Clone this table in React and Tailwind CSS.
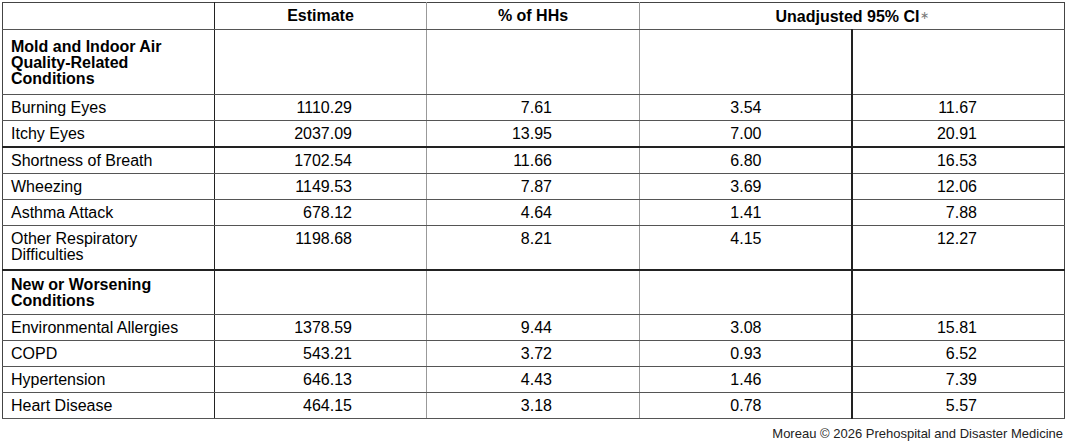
import React from 'react'

const groups = [
  {
    title: ['Mold and Indoor Air', 'Quality-Related', 'Conditions'],
    h: 'h-[65px]',
    pt: 'pt-[9px]',
    rows: [
      { label: 'Burning Eyes', est: '1110.29', pct: '7.61', lo: '3.54', hi: '11.67' },
      { label: 'Itchy Eyes', est: '2037.09', pct: '13.95', lo: '7.00', hi: '20.91', thick: true },
      { label: 'Shortness of Breath', est: '1702.54', pct: '11.66', lo: '6.80', hi: '16.53' },
      { label: 'Wheezing', est: '1149.53', pct: '7.87', lo: '3.69', hi: '12.06' },
      { label: 'Asthma Attack', est: '678.12', pct: '4.64', lo: '1.41', hi: '7.88' },
      { label: ['Other Respiratory', 'Difficulties'], est: '1198.68', pct: '8.21', lo: '4.15', hi: '12.27', thick: true, tall: true },
    ],
  },
  {
    title: ['New or Worsening', 'Conditions'],
    h: 'h-[45px]',
    pt: 'pt-[6px]',
    rows: [
      { label: 'Environmental Allergies', est: '1378.59', pct: '9.44', lo: '3.08', hi: '15.81' },
      { label: 'COPD', est: '543.21', pct: '3.72', lo: '0.93', hi: '6.52' },
      { label: 'Hypertension', est: '646.13', pct: '4.43', lo: '1.46', hi: '7.39' },
      { label: 'Heart Disease', est: '464.15', pct: '3.18', lo: '0.78', hi: '5.57' },
    ],
  },
]

const lineLabel = (label) =>
  Array.isArray(label) ? label.map((l, i) => <div key={i}>{l}</div>) : label

function App() {
  return (
    <div className="w-[1067px] h-[441px] bg-white pl-[2px] pt-[2px] text-black font-['Liberation_Sans',Arial,sans-serif] text-[16px] leading-[16px]">
      <table className="w-[1062px] table-fixed border-collapse border border-[#444]">
        <colgroup>
          <col className="w-[212px]" />
          <col className="w-[212px]" />
          <col className="w-[213px]" />
          <col className="w-[212px]" />
          <col className="w-[213px]" />
        </colgroup>
        <thead>
          <tr className="h-[27px] font-bold">
            <th className="border-r border-b border-r-[#222] border-b-[#555]"></th>
            <th className="border-r border-b border-r-[#999] border-b-[#555] text-center font-bold">Estimate</th>
            <th className="border-r border-b border-r-[#999] border-b-[#555] text-center font-bold">% of HHs</th>
            <th colSpan={2} className="border-b border-b-[#555] text-center font-bold">
              Unadjusted 95% CI<span className="text-[11px] font-normal text-[#777] align-[3px]">∗</span>
            </th>
          </tr>
        </thead>
        <tbody>
          {groups.map((g, gi) => (
            <React.Fragment key={gi}>
              <tr className={g.h}>
                <td className={`align-top pl-[8px] ${g.pt} font-bold border-r border-b border-r-[#222] border-b-[#555]`}>
                  {g.title.map((t, i) => <div key={i}>{t}</div>)}
                </td>
                <td className="border-r border-b border-r-[#999] border-b-[#555]"></td>
                <td className="border-r border-b border-r-[#999] border-b-[#555]"></td>
                <td className="border-r-2 border-b border-r-[#222] border-b-[#555]"></td>
                <td className="border-b border-b-[#555]"></td>
              </tr>
              {g.rows.map((r, ri) => {
                const bb = r.thick ? 'border-b-2 border-b-[#222]' : 'border-b border-b-[#555]'
                const h = r.tall ? 'h-[44px]' : 'h-[26px]'
                return (
                  <tr key={ri} className={h}>
                    <td className={`align-top pl-[8px] pt-[5px] pb-[4px] border-r border-r-[#222] ${bb}`}>{lineLabel(r.label)}</td>
                    <td className={`align-top text-right pr-[74px] pt-[5px] border-r border-r-[#999] ${bb}`}>{r.est}</td>
                    <td className={`align-top text-right pr-[87px] pt-[5px] border-r border-r-[#999] ${bb}`}>{r.pct}</td>
                    <td className={`align-top text-right pr-[89px] pt-[5px] border-r-2 border-r-[#222] ${bb}`}>{r.lo}</td>
                    <td className={`align-top text-right pr-[87px] pt-[5px] ${bb}`}>{r.hi}</td>
                  </tr>
                )
              })}
            </React.Fragment>
          ))}
        </tbody>
      </table>
      <div className="flex justify-end pr-[4px] pt-[7px] text-[13px] leading-[15px] text-[#222]">
        Moreau © 2026 Prehospital and Disaster Medicine
      </div>
    </div>
  )
}

export default App
